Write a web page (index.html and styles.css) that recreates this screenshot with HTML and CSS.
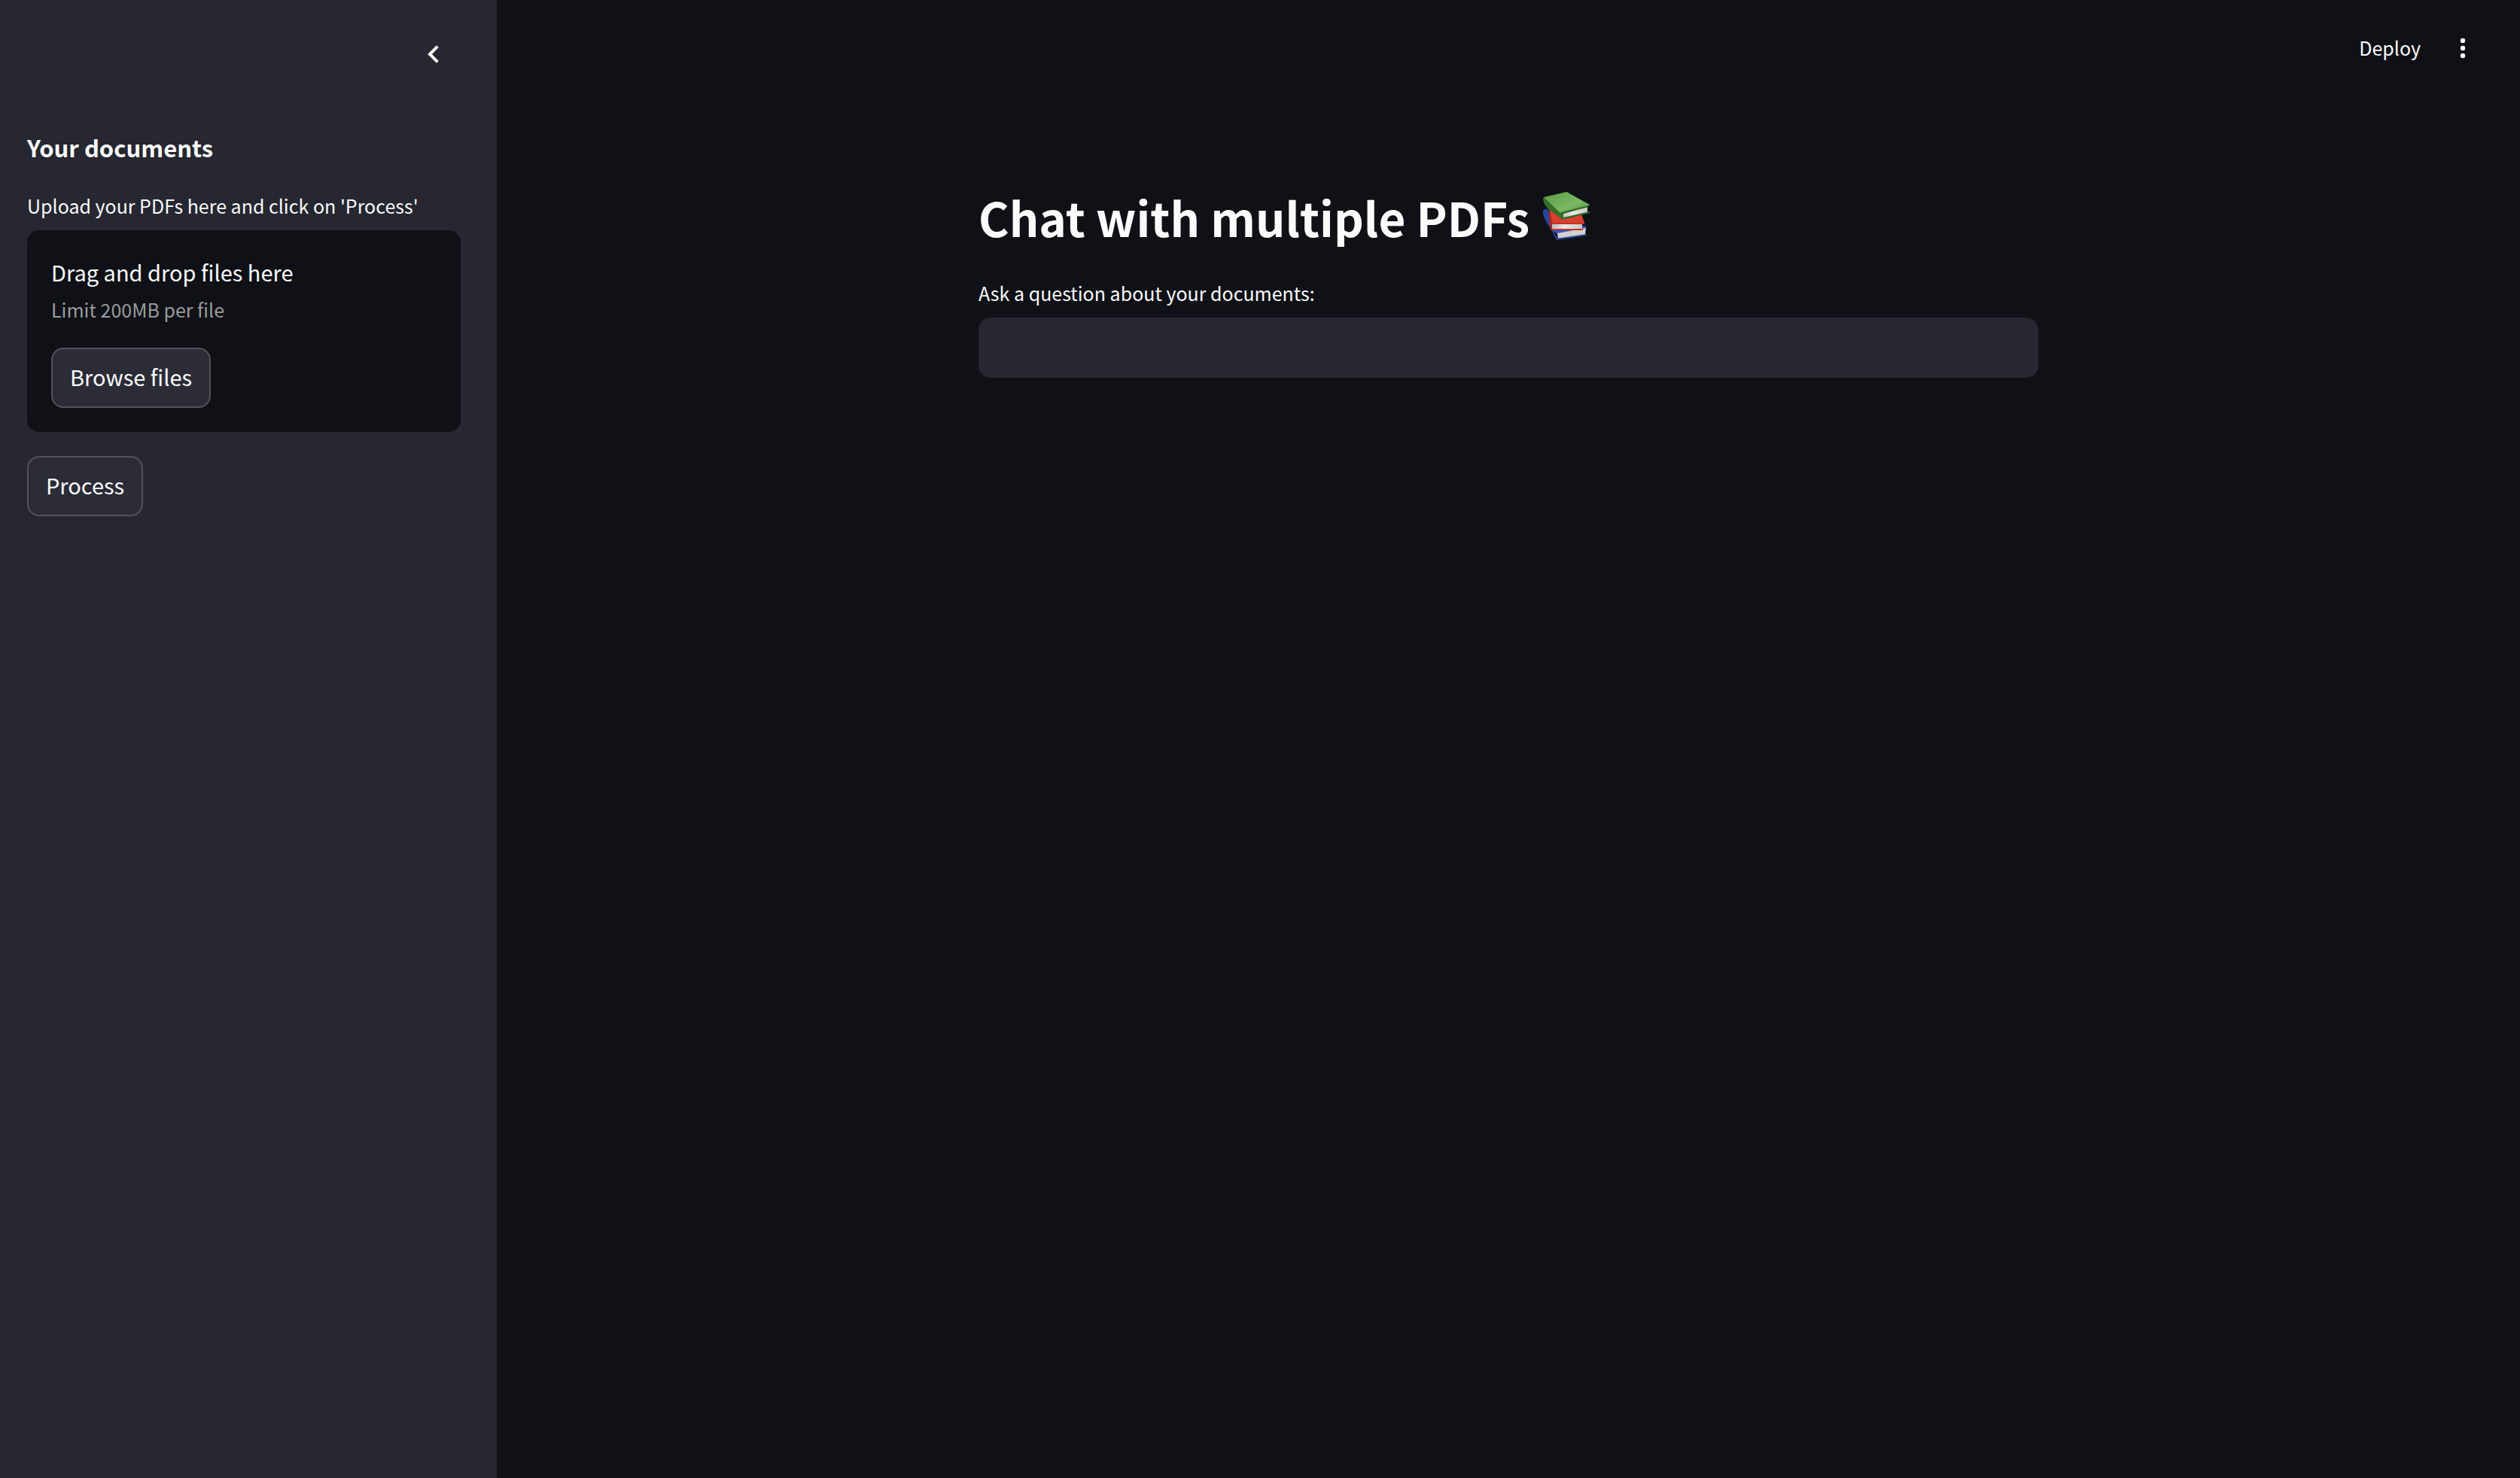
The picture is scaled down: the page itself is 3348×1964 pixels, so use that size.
FILE: index.html
```html
<!DOCTYPE html>
<html lang="en">
<head>
<meta charset="utf-8">
<meta name="viewport" content="width=device-width, initial-scale=1">
<title>Chat with multiple PDFs</title>
<link rel="stylesheet" href="styles.css">
</head>
<body>
<div class="app">
  <aside class="sidebar">
    <div class="sidebar-top">
      <button class="icon-button" type="button" aria-label="Collapse sidebar">
        <svg class="chevron" viewBox="0 0 32 32" aria-hidden="true"><path d="M21.4 5.6 11 16l10.400 10.400"/></svg>
      </button>
    </div>
    <h2 class="sidebar-title">Your documents</h2>
    <label class="label" for="browse">Upload your PDFs here and click on 'Process'</label>
    <section class="dropzone">
      <span class="drop-title">Drag and drop files here</span>
      <span class="drop-limit">Limit 200MB per file</span>
      <button class="button" id="browse" type="button">Browse files</button>
    </section>
    <button class="button" type="button">Process</button>
  </aside>
  <div class="content">
    <header class="toolbar">
      <button class="deploy" type="button">Deploy</button>
      <button class="icon-button" type="button" aria-label="Main menu">
        <svg class="dots" viewBox="0 0 32 32" aria-hidden="true"><circle cx="16" cy="6" r="3.2"/><circle cx="16" cy="16" r="3.2"/><circle cx="16" cy="26" r="3.2"/></svg>
      </button>
    </header>
    <main class="main">
      <h1 class="title">
        <span>Chat with multiple PDFs</span>
        <svg class="books" viewBox="0 0 64 66" role="img" aria-label="Books">
          <defs>
            <linearGradient id="green" x1="0" y1="0" x2="1" y2="1"><stop offset="0" stop-color="#5c9b45"/><stop offset=".6" stop-color="#7ab864"/><stop offset="1" stop-color="#559440"/></linearGradient>
            <linearGradient id="pages" x1="0" y1="0" x2="1" y2="0"><stop offset="0" stop-color="#bdbdbb"/><stop offset=".4" stop-color="#e9e9e7"/><stop offset="1" stop-color="#c6c6c4"/></linearGradient>
          </defs>
          <path fill="#29469b" d="M0 25q2-3 7-2l4 24 9 16-2 1-7-14Q2 38 0 29z"/>
          <path fill="#3455bd" d="M11 50l45-5 2 4-39 7z"/>
          <path fill="#d0d0ce" d="M19 55l38-7-1 9-36 5z"/>
          <path fill="#243f91" d="M18 62l40-6v2l-39 6z"/>
          <path fill="#a8271e" d="M8 22l5 22-1 6-2-1-2-14z"/>
          <path fill="#d9402f" d="M8 21l40 0 7 20H12z"/>
          <path fill="url(#pages)" d="M12 42h40v8H12z"/>
          <path fill="#c63327" d="M11 41h44v2H12zM10 49h43v2H11z"/>
          <path fill="#356d27" d="M0 10q0-3 3-3l22 21v8L6 22Q1 16 0 10z"/>
          <path fill="url(#green)" d="M1 7 31 0q2 0 4 2l27 15q0 1-3 2L27 28q-3 1-5-1z"/>
          <path fill="url(#pages)" d="M26 29l33-9v7l-32 8z"/>
          <path fill="#2f6c25" d="M24 27l36-9v2l-33 9v5l35-8v2l-36 9-3-4z"/>
        </svg>
      </h1>
      <label class="label" for="question">Ask a question about your documents:</label>
      <input class="question" id="question" type="text">
    </main>
  </div>
</div>
</body>
</html>
```
FILE: styles.css
```css
* {
  box-sizing: border-box;
}

body {
  margin: 0;
  background: #0f1116;
  color: #fafafa;
  font-family: "Noto Sans CJK SC", "Noto Sans", sans-serif;
  font-size: 29px;
}

button,
input {
  margin: 0;
  color: inherit;
  font: inherit;
}

.app {
  display: flex;
  min-height: 100vh;
}

.sidebar {
  display: flex;
  flex: none;
  flex-direction: column;
  align-items: flex-start;
  width: 660px;
  padding: 56px 48px 48px 36px;
  background: #262730;
}

.sidebar-top {
  display: flex;
  align-self: stretch;
  justify-content: flex-end;
  padding-right: 20px;
  margin-bottom: 84px;
}

.icon-button {
  display: block;
  padding: 0;
  border: 0;
  background: none;
}

.icon-button svg {
  display: block;
  width: 32px;
  height: 32px;
}

.chevron {
  fill: none;
  stroke: #fafafa;
  stroke-width: 4;
}

.dots {
  fill: #fafafa;
}

.sidebar-title {
  margin: 0 0 32px;
  font-size: 31px;
  font-weight: 700;
  line-height: 48px;
}

.label {
  display: block;
  margin-bottom: 12px;
  font-size: 25px;
  line-height: 42px;
}

.dropzone {
  display: flex;
  flex-direction: column;
  align-items: flex-start;
  align-self: stretch;
  padding: 32px;
  margin-bottom: 32px;
  border-radius: 16px;
  background: #0f1116;
}

.drop-title {
  margin-bottom: 8px;
  line-height: 46px;
}

.drop-limit {
  margin-bottom: 32px;
  color: #9b9b9d;
  font-size: 25px;
  line-height: 38px;
}

.button {
  height: 80px;
  padding: 0 23px 4px;
  border: 2px solid #53545b;
  border-radius: 16px;
  background: #2b2c36;
  line-height: 48px;
}

.content {
  flex: 1;
  min-width: 0;
}

.toolbar {
  display: flex;
  align-items: center;
  justify-content: flex-end;
  gap: 40px;
  padding: 40px 60px 0 0;
}

.deploy {
  padding: 0 0 2px;
  border: 0;
  background: none;
  font-size: 25px;
  line-height: 46px;
}

.main {
  max-width: 1408px;
  padding-top: 156px;
  margin: 0 auto;
}

.title {
  display: flex;
  align-items: center;
  gap: 18px;
  margin: 0 0 36px;
  font-size: 62px;
  font-weight: 700;
  line-height: 88px;
}

.books {
  width: 64px;
  height: 66px;
}

.question {
  display: block;
  width: 100%;
  height: 80px;
  padding: 0 24px;
  border: 0;
  border-radius: 16px;
  background: #262730;
}
```
